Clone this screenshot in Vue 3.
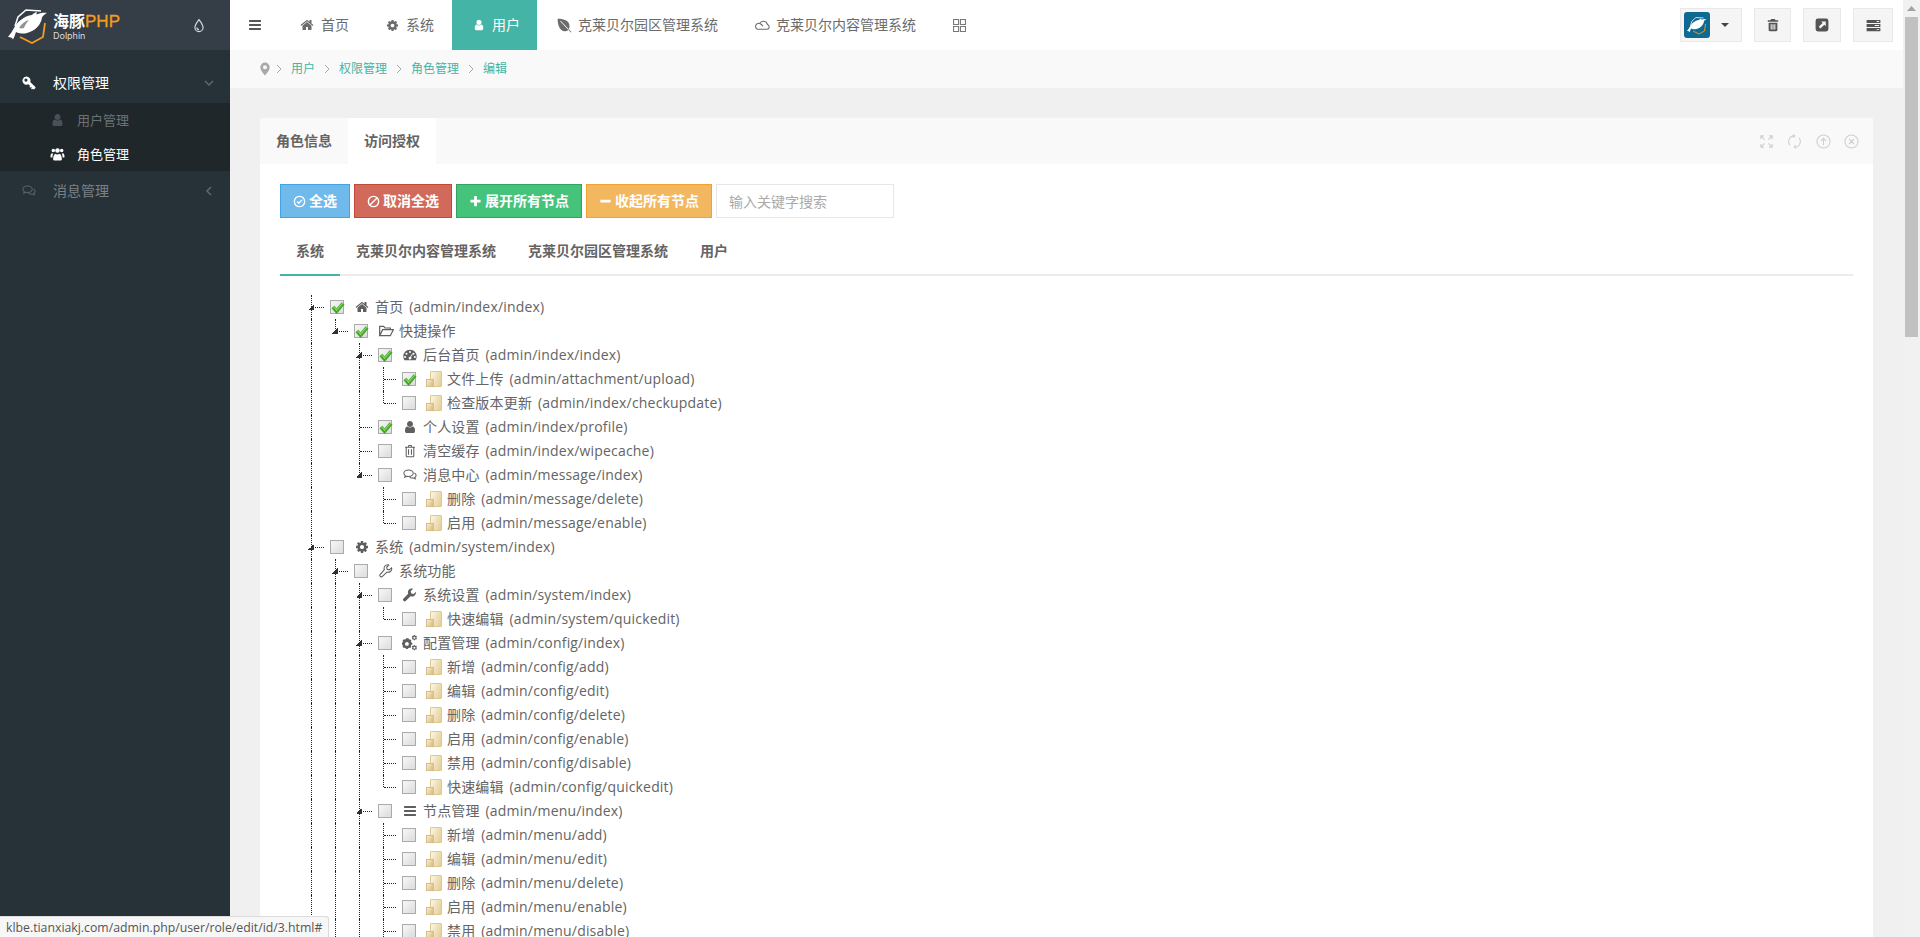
<script setup>
const FA = '0 0 1792 1792'
const V = '0 0 24 24'
const icons = {
  home: { vb: FA, d: 'M1472 992v480q0 26-19 45t-45 19h-384v-384h-256v384h-384q-26 0-45-19t-19-45v-480q0-1 .5-3t.5-3l575-474 575 474q1 2 1 6zm223-69l-62 74q-8 9-21 11h-3q-13 0-21-7l-692-577-692 577q-12 8-24 7-13-2-21-11l-62-74q-8-10-7-23.5t11-21.5l719-599q32-26 76-26t76 26l244 204v-195q0-14 9-23t23-9h192q14 0 23 9t9 23v408l219 182q10 8 11 21.5t-7 23.5z' },
  cog: { vb: FA, d: 'M1152 896q0-106-75-181t-181-75-181 75-75 181 75 181 181 75 181-75 75-181zm512-109v222q0 12-8 23t-20 13l-185 28q-19 54-39 91 35 50 107 138 10 12 10 25t-9 23q-27 37-99 108t-94 71q-12 0-26-9l-138-108q-44 23-91 38-16 136-29 186-7 28-36 28h-222q-14 0-24.5-8.5t-11.5-21.5l-28-184q-49-16-90-37l-141 107q-10 9-25 9-14 0-25-11-126-114-165-168-7-10-7-23 0-12 8-23 15-21 51-66.5t54-70.5q-27-50-41-99l-183-27q-13-2-21-12.5t-8-23.5v-222q0-12 8-23t19-13l186-28q14-46 39-92-40-57-107-138-10-12-10-24 0-10 9-23 26-36 98.5-107.5t94.5-71.5q13 0 26 10l138 107q44-23 91-38 16-136 29-186 7-28 36-28h222q14 0 24.5 8.5t11.5 21.5l28 184q49 16 90 37l142-107q9-9 24-9 13 0 25 10 129 119 165 170 7 8 7 22 0 12-8 23-15 21-51 66.5t-54 70.5q26 50 41 98l183 28q13 2 21 12.5t8 23.5z' },
  user: { vb: FA, d: 'M1536 1399q0 109-62.5 187t-150.5 78h-854q-88 0-150.5-78t-62.5-187q0-85 8.5-160.5t31.5-152 58.5-131 94-89 134.5-34.5q131 128 313 128t313-128q76 0 134.5 34.5t94 89 58.5 131 31.5 152 8.5 160.5zm-256-887q0 159-112.5 271.5t-271.5 112.5-271.5-112.5-112.5-271.5 112.5-271.5 271.5-112.5 271.5 112.5 112.5 271.5z' },
  bars: { vb: FA, d: 'M1664 1344v128q0 26-19 45t-45 19h-1408q-26 0-45-19t-19-45v-128q0-26 19-45t45-19h1408q26 0 45 19t19 45zm0-512v128q0 26-19 45t-45 19h-1408q-26 0-45-19t-19-45v-128q0-26 19-45t45-19h1408q26 0 45 19t19 45zm0-512v128q0 26-19 45t-45 19h-1408q-26 0-45-19t-19-45v-128q0-26 19-45t45-19h1408q26 0 45 19t19 45z' },
  plus: { vb: FA, d: 'M1600 736v192q0 40-28 68t-68 28h-416v416q0 40-28 68t-68 28h-192q-40 0-68-28t-28-68v-416h-416q-40 0-68-28t-28-68v-192q0-40 28-68t68-28h416v-416q0-40 28-68t68-28h192q40 0 68 28t28 68v416h416q40 0 68 28t28 68z' },
  minus: { vb: FA, d: 'M1600 736v192q0 40-28 68t-68 28h-1216q-40 0-68-28t-28-68v-192q0-40 28-68t68-28h1216q40 0 68 28t28 68z' },
  users: { vb: V, d: 'M12 10a4 4 0 1 0 0-8 4 4 0 0 0 0 8zM4.800 9a3 3 0 1 0 0-6 3 3 0 0 0 0 6zM19.200 9a3 3 0 1 0 0-6 3 3 0 0 0 0 6zM6.200 23h11.600c.9 0 1.700-.7 1.700-1.800 0-4.200-1-8.200-3.600-9.800-1 .9-2.400 1.400-3.900 1.400s-2.900-.5-3.900-1.400C5.500 13 4.500 17 4.500 21.200c0 1.100.8 1.800 1.700 1.800zM0 16.500c0 1 .7 1.500 1.500 1.500h1.800c0-2.500.3-5 1.400-7-.9-.1-1.300 0-2.200-.4C.8 11.200 0 13.800 0 16.500zM24 16.500c0 1-.7 1.500-1.500 1.500h-1.800c0-2.500-.3-5-1.400-7 .9-.1 1.300 0 2.200-.4 1.700.6 2.500 3.200 2.500 5.900z' },
  leaf: { vb: V, d: 'M1 1C12 1 20 4 20 13c0 6-4 8-7.500 8C4 21 1 10 1 1zM5 5l17.300 18.300.9-.9L5.800 4.200z' },
  cloud: { vb: V, stroke: true, d: 'M5.500 18.500a4.500 4.500 0 1 1 1.500-8.700 6.300 6.300 0 0 1 11.700 1.500 3.700 3.700 0 0 1-.7 7.200zM7 9.800c2.200.6 3.800 2 4.800 4.200' },
  grid: { vb: V, stroke: true, d: 'M2.500 2.500h8v8h-8zM13.500 2.500h8v8h-8zM2.500 13.500h8v8h-8zM13.500 13.500h8v8h-8z' },
  tint: { vb: V, stroke: true, d: 'M12 2C12 2 5 11 5 15.500a7 7 0 0 0 14 0C19 11 12 2 12 2zM8.500 15.500a3.500 3.500 0 0 0 3.500 3.500' },
  key: { vb: V, d: 'M7.500 1a7 7 0 0 1 6.600 9.400l8.900 8.600v1.700l-1.800 1.800h-1.700l-.9-.8-1.500 1.400-1.600-1.600 1.400-1.500-1.200-1.200-1.500 1.400-1.600-1.600 1.400-1.400-3-3A7 7 0 1 1 7.500 1zM6.800 4.300a2.700 2.700 0 1 0 0 5.400 2.700 2.700 0 0 0 0-5.400z' },
  comments: { vb: V, stroke: true, d: 'M9.500 3.500c-4.400 0-8 2.400-8 5.500 0 1.600 1 3.100 2.500 4.100L3 15.800l3.300-1.500c1 .3 2.100.3 3.200.3 4.400 0 8-2.500 8-5.600s-3.600-5.500-8-5.500zM19.500 8.500c1.900.9 3 2.400 3 4 0 1.500-.9 2.800-2.300 3.700l.8 2.300-3-1.400c-2.500.5-5-.1-6.500-1.600' },
  pin: { vb: V, d: 'M12 1a8 8 0 0 0-8 8c0 5 5 11 8 14 3-3 8-9 8-14a8 8 0 0 0-8-8zm0 11.500a3.500 3.500 0 1 1 0-7 3.500 3.500 0 0 1 0 7z' },
  trash: { vb: V, d: 'M9 1.500h6l1.500 2.500H21v2.500H3V4h4.500zM4.500 8h15v12.500c0 1.200-.8 2-2 2h-11c-1.200 0-2-.8-2-2zM8 10.500v9h1.800v-9zM11.100 10.500v9h1.800v-9zM14.200 10.500v9H16v-9z' },
  trashO: { vb: V, stroke: true, d: 'M3.500 5.500h17M9 5.500l1-3h4l1 3M5.500 5.500v15c0 .8.500 1.500 1.300 1.500h10.400c.8 0 1.300-.7 1.300-1.500v-15M9.500 9v9.500M14.500 9v9.500' },
  link: { vb: V, d: 'M5 1h14a4 4 0 0 1 4 4v14a4 4 0 0 1-4 4H5a4 4 0 0 1-4-4V5a4 4 0 0 1 4-4zm5.500 5l2.600 2.600-6.600 6.400 2.900 2.900 6.500-6.500 2.600 2.600V6z' },
  server: { vb: V, d: 'M1 3h22v5H1zM17 4.800v1.400h4V4.800zM1 9.500h22v5H1zM14 11.300v1.400h7v-1.400zM1 16h22v5H1zM17 17.800v1.400h4v-1.400z' },
  dash: { vb: V, d: 'M12 3C5.400 3 .5 8 .5 14.500c0 2.500.7 4.500 2 6.500h19c1.300-2 2-4 2-6.500C23.500 8 18.600 3 12 3zM12 5.300a1.700 1.700 0 1 1 0 3.400 1.700 1.700 0 0 1 0-3.400zM6 8a1.800 1.800 0 1 1 0 3.600A1.800 1.800 0 0 1 6 8zM3.600 13.500a1.800 1.800 0 1 1 0 3.600 1.800 1.800 0 0 1 0-3.600zM20.400 13.500a1.800 1.800 0 1 1 0 3.600 1.800 1.800 0 0 1 0-3.600zM18 8a1.800 1.800 0 1 1 0 3.600A1.800 1.800 0 0 1 18 8zM16 8.800l1.300.8-3.500 6a2.400 2.400 0 1 1-1.400-.7z' },
  folder: { vb: V, stroke: true, d: 'M2.500 19V5h6l2 2.500h8V10M2.500 19h16L23 10H7z' },
  wrenchO: { vb: V, stroke: true, d: 'M21.500 6.500l-4 3.500-3.500-.9-.9-3.500 3.700-3.700c-2.600-.9-5.300-.2-6.900 1.900-1.300 1.800-1.500 4-.7 6L2.200 17.600a2.600 2.600 0 0 0 3.700 3.700l7.700-7.500c2 .8 4.300.5 6-.9 2-1.700 2.700-4.100 1.900-6.400z' },
  wrench: { vb: V, d: 'M22.500 6.500l-4.300 3.900-3.900-1-1.100-3.900 4.100-4.100c-2.900-1-5.900-.2-7.600 2.100-1.400 1.900-1.700 4.300-.8 6.500l-8 7.900a2.900 2.900 0 0 0 4.100 4.100l8-7.900c2.200.9 4.700.6 6.600-1 2.200-1.800 3-4.400 2.900-6.600z' },
  cogs: { vb: V, d: 'M8.800 5l1.200.3.600 1.600 1.500-.5 1.900 1.900-.6 1.400.7 1.500 1.400.5v2.600l-1.400.5-.7 1.500.6 1.400-1.900 1.900-1.400-.6-1.500.7-.5 1.400H6.100l-.5-1.400-1.500-.7-1.400.6-1.900-1.900.6-1.400-.7-1.500-1.400-.5v-2.600l1.400-.5.7-1.500-.6-1.400 1.900-1.900 1.400.5 1.500-.6.500-1.300zM7.400 10.500a2.900 2.900 0 1 0 0 5.800 2.900 2.900 0 0 0 0-5.800zM19.500 0l.5 1.500 1.500-.2.900 1.600-1 1.100 1 1.100-.9 1.600-1.500-.2-.5 1.500h-1.800l-.5-1.500-1.500.2-.9-1.600 1-1.100-1-1.100.9-1.600 1.500.2.500-1.500zM18.600 2.500a1.500 1.500 0 1 0 0 3 1.500 1.500 0 0 0 0-3zM19.500 15l.5 1.500 1.500-.2.900 1.600-1 1.100 1 1.100-.9 1.600-1.500-.2-.5 1.500h-1.800l-.5-1.500-1.500.2-.9-1.600 1-1.100-1-1.100.9-1.600 1.500.2.500-1.500zM18.600 17.500a1.500 1.500 0 1 0 0 3 1.500 1.500 0 0 0 0-3z' },
  checkO: { vb: V, stroke: true, d: 'M12 2.500a9.500 9.500 0 1 0 0 19 9.500 9.500 0 0 0 0-19zM7.500 12l3.200 3.300 6-6.300' },
  ban: { vb: V, stroke: true, d: 'M12 2.500a9.500 9.500 0 1 0 0 19 9.500 9.500 0 0 0 0-19zM5.500 18.500l13-13' },
  expand: { vb: V, stroke: true, d: 'M9 9L3 3M3 8V3h5M15 9l6-6M16 3h5v5M9 15l-6 6M3 16v5h5M15 15l6 6M21 16v5h-5' },
  sync: { vb: V, stroke: true, d: 'M5 18A9 9 0 0 1 12 3M9 1l3.500 2L10 6M19 6a9 9 0 0 1-7 15M15 23l-3.500-2 2.500-3' },
  up: { vb: V, stroke: true, d: 'M12 1.500a10.500 10.500 0 1 0 0 21 10.500 10.500 0 0 0 0-21zM12 18V7M7.500 11.500L12 7l4.500 4.500' },
  close: { vb: V, stroke: true, d: 'M12 1.500a10.500 10.500 0 1 0 0 21 10.500 10.500 0 0 0 0-21zM8 8l8 8M16 8l-8 8' }
}

const navItems = [
  { icon: 'home', label: '首页' },
  { icon: 'cog', label: '系统' },
  { icon: 'user', label: '用户', active: true },
  { icon: 'leaf', label: '克莱贝尔园区管理系统' },
  { icon: 'cloud', label: '克莱贝尔内容管理系统' }
]
const crumbs = ['用户', '权限管理', '角色管理', '编辑']
const actions = [
  { cls: 'info', icon: 'checkO', label: '全选' },
  { cls: 'danger', icon: 'ban', label: '取消全选' },
  { cls: 'success', icon: 'plus', label: '展开所有节点' },
  { cls: 'warning', icon: 'minus', label: '收起所有节点' }
]
const subTabs = ['系统', '克莱贝尔内容管理系统', '克莱贝尔园区管理系统', '用户']

const f = (label, on = false) => ({ label, on })
const tree = [
  { label: '首页 (admin/index/index)', icon: 'home', on: true, c: [
    { label: '快捷操作', icon: 'folder', on: true, c: [
      { label: '后台首页 (admin/index/index)', icon: 'dash', on: true, c: [
        f('文件上传 (admin/attachment/upload)', true),
        f('检查版本更新 (admin/index/checkupdate)')
      ] },
      { label: '个人设置 (admin/index/profile)', icon: 'user', on: true },
      { label: '清空缓存 (admin/index/wipecache)', icon: 'trashO' },
      { label: '消息中心 (admin/message/index)', icon: 'comments', c: [
        f('删除 (admin/message/delete)'),
        f('启用 (admin/message/enable)')
      ] }
    ] }
  ] },
  { label: '系统 (admin/system/index)', icon: 'cog', more: true, c: [
    { label: '系统功能', icon: 'wrenchO', more: true, c: [
      { label: '系统设置 (admin/system/index)', icon: 'wrench', c: [
        f('快速编辑 (admin/system/quickedit)')
      ] },
      { label: '配置管理 (admin/config/index)', icon: 'cogs', c: [
        f('新增 (admin/config/add)'),
        f('编辑 (admin/config/edit)'),
        f('删除 (admin/config/delete)'),
        f('启用 (admin/config/enable)'),
        f('禁用 (admin/config/disable)'),
        f('快速编辑 (admin/config/quickedit)')
      ] },
      { label: '节点管理 (admin/menu/index)', icon: 'bars', more: true, c: [
        f('新增 (admin/menu/add)'),
        f('编辑 (admin/menu/edit)'),
        f('删除 (admin/menu/delete)'),
        f('启用 (admin/menu/enable)'),
        { label: '禁用 (admin/menu/disable)', more: true }
      ] }
    ] }
  ] }
]
const rows = []
const walk = (nodes, guides) => nodes.forEach((n, i) => {
  const last = i === nodes.length - 1 && !n.more
  rows.push({ ...n, guides, last, parent: !!n.c })
  if (n.c) walk(n.c, [...guides, !last])
})
walk(tree, [])
</script>

<template>
  <div class="app">
    <aside class="side">
      <div class="brand">
        <svg class="logo" viewBox="6 5 44 40">
          <path class="hex-w" d="M15 26l3-9 8-7 15 1" />
          <path class="hex-o" d="M20 37l12 6 11-6 2-14" />
          <path class="dolphin" d="M8 37c2.500-3 4.500-6 6-9 3-6 10-12 18-13 1-1.500 3-2.500 5-3-.5 1-.5 2-.5 2.500 3.500-1.500 7-2 10.500-1.500-2 1-4 2.500-5 4.500C41 25 35 31 27 33c-4 1-8 .5-11-1-1 3-2 5.500-3 7.500-.5-1.500-2-2.500-5-2.500z" />
          <path class="hole" d="M19 28c2-4 6-7 10-8-2 2-4 5-5 8-2 .5-3.500.5-5 0z" />
        </svg>
        <div class="brand-text">
          <div class="brand-name">海豚<b>PHP</b></div>
          <div class="brand-sub">Dolphin</div>
        </div>
        <svg class="ic tint" :viewBox="icons.tint.vb"><path class="st" :d="icons.tint.d" /></svg>
      </div>
      <nav class="menu">
        <div class="m-row open">
          <svg class="ic m-ic" :viewBox="icons.key.vb"><path fill-rule="evenodd" :d="icons.key.d" /></svg>
          <span>权限管理</span>
          <svg class="chev" viewBox="0 0 12 12"><path d="M2 4l4 4 4-4" /></svg>
        </div>
        <div class="sub">
          <div class="s-row">
            <svg class="ic s-ic" :viewBox="icons.user.vb"><path :d="icons.user.d" /></svg>
            <span>用户管理</span>
          </div>
          <div class="s-row cur">
            <svg class="ic s-ic" :viewBox="icons.users.vb"><path :d="icons.users.d" /></svg>
            <span>角色管理</span>
          </div>
        </div>
        <div class="m-row">
          <svg class="ic m-ic" :viewBox="icons.comments.vb"><path class="st" :d="icons.comments.d" /></svg>
          <span>消息管理</span>
          <svg class="chev" viewBox="0 0 12 12"><path d="M8 2L4 6l4 4" /></svg>
        </div>
      </nav>
    </aside>

    <div class="main">
      <header class="top">
        <div class="burger">
          <svg class="ic i14" :viewBox="icons.bars.vb"><path :d="icons.bars.d" /></svg>
        </div>
        <a v-for="n in navItems" :key="n.label" class="nav" :class="[{ on: n.active }, 'n-' + n.icon]">
          <svg class="ic" :viewBox="icons[n.icon].vb"><path :class="{ st: icons[n.icon].stroke }" fill-rule="evenodd" :d="icons[n.icon].d" /></svg>
          <span>{{ n.label }}</span>
        </a>
        <div class="grid-btn">
          <svg class="ic i15" :viewBox="icons.grid.vb"><path class="st" :d="icons.grid.d" /></svg>
        </div>
        <div class="top-right">
          <div class="tool avatar-btn">
            <div class="avatar">
              <svg viewBox="6 5 44 40">
                <path class="hex-o" d="M20 37l12 6 11-6 2-14" />
                <path class="hex-w" d="M15 26l3-9 8-7 15 1" />
                <path class="dolphin" d="M8 37c2.500-3 4.500-6 6-9 3-6 10-12 18-13 1-1.500 3-2.500 5-3-.5 1-.5 2-.5 2.500 3.500-1.500 7-2 10.500-1.500-2 1-4 2.500-5 4.500C41 25 35 31 27 33c-4 1-8 .5-11-1-1 3-2 5.500-3 7.500-.5-1.500-2-2.500-5-2.500z" />
              </svg>
            </div>
            <i class="caret"></i>
          </div>
          <div class="tool t-trash"><svg class="ic i14" :viewBox="icons.trash.vb"><path fill-rule="evenodd" :d="icons.trash.d" /></svg></div>
          <div class="tool t-link"><svg class="ic i14" :viewBox="icons.link.vb"><path fill-rule="evenodd" :d="icons.link.d" /></svg></div>
          <div class="tool t-server"><svg class="ic i15" :viewBox="icons.server.vb"><path fill-rule="evenodd" :d="icons.server.d" /></svg></div>
        </div>
      </header>

      <div class="crumbs">
        <svg class="ic pin" :viewBox="icons.pin.vb"><path fill-rule="evenodd" :d="icons.pin.d" /></svg>
        <template v-for="c in crumbs" :key="c">
          <svg class="sep" viewBox="0 0 8 10"><path d="M2 1l4 4-4 4" /></svg>
          <a>{{ c }}</a>
        </template>
      </div>

      <section class="card">
        <div class="card-head">
          <a class="c-tab">角色信息</a>
          <a class="c-tab on">访问授权</a>
          <div class="card-tools">
            <svg v-for="t in ['expand', 'sync', 'up', 'close']" :key="t" class="ic i15" :viewBox="icons[t].vb"><path class="st" :d="icons[t].d" /></svg>
          </div>
        </div>
        <div class="card-body">
          <div class="actions">
            <button v-for="a in actions" :key="a.label" class="btn" :class="a.cls">
              <svg class="ic i13" :viewBox="icons[a.icon].vb"><path :class="{ st: icons[a.icon].stroke }" :d="icons[a.icon].d" /></svg>
              {{ a.label }}
            </button>
            <input class="search" placeholder="输入关键字搜索" />
          </div>
          <div class="sub-tabs">
            <a v-for="(t, i) in subTabs" :key="t" class="sub-tab" :class="{ on: i === 0 }">{{ t }}</a>
          </div>
          <div class="tree">
            <div v-for="(r, i) in rows" :key="i" class="row">
              <i v-for="(g, j) in r.guides" :key="j" class="cell" :class="{ guide: g }"></i>
              <i class="cell conn" :class="{ end: r.last, par: r.parent }"></i>
              <span class="cb">
                <svg v-if="r.on" class="tick" viewBox="0 0 16 14"><path class="tick-a" d="M2.500 6.500l4 4.500 7-8.500" /><path class="tick-b" d="M2.500 5.500l4 4.300 7-8" /></svg>
              </span>
              <span class="node-ic">
                <svg v-if="r.icon" class="ic i14" :class="{ big: r.icon === 'cogs' || r.icon === 'folder' }" :viewBox="icons[r.icon].vb"><path :class="{ st: icons[r.icon].stroke }" fill-rule="evenodd" :d="icons[r.icon].d" /></svg>
                <i v-else class="file"></i>
              </span>
              <span class="node-txt">{{ r.label }}</span>
            </div>
          </div>
        </div>
      </section>
    </div>

    <div class="scrollbar">
      <svg viewBox="0 0 9 5"><path d="M4.500 0L9 5H0z" /></svg>
      <div class="thumb"></div>
    </div>
    <div class="status">klbe.tianxiakj.com/admin.php/user/role/edit/id/3.html#</div>
  </div>
</template>

<style>
html, body { margin: 0; height: 100%; overflow: hidden; }
</style>

<style scoped>
.app {
  display: flex;
  height: 937px;
  overflow: hidden;
  position: relative;
  background: #f0f0f0;
  color: #646464;
  font: 14px/20px "Open Sans", "Noto Sans CJK SC", sans-serif;
}
.ic { display: block; fill: currentColor; flex: none; }
.st { fill: none; stroke: currentColor; stroke-width: 2; }
.i13 { width: 13px; height: 13px; }
.i14 { width: 14px; height: 14px; }
.i15 { width: 15px; height: 15px; }
.big { width: 16px; height: 16px; }

.side { width: 230px; flex: none; background: #263238; }
.brand { height: 50px; background: #353e47; display: flex; align-items: center; padding: 0 24px 0 6px; color: #fff; }
.logo { width: 44px; height: 40px; flex: none; }
.hex-w { fill: none; stroke: #fff; stroke-width: 1.500; }
.hex-o { fill: none; stroke: #f39c1f; stroke-width: 1.800; }
.dolphin { fill: #fff; }
.hole { fill: #353e47; opacity: .55; }
.brand-text { margin-left: 3px; }
.brand-name { font-size: 16px; line-height: 18px; font-weight: 700; margin-top: 3px; display: flex; align-items: baseline; }
.brand-name b { color: #f39c1f; font-family: "Liberation Sans", sans-serif; font-weight: 400; font-size: 17px; -webkit-text-stroke: .3px #f39c1f; }
.brand-sub { font-size: 9px; line-height: 10px; color: #ddd; font-family: "Inter", sans-serif; }
.tint { width: 14px; height: 17px; color: #cfdde6; margin-left: auto; }

.menu { padding-top: 13px; }
.m-row { height: 40px; display: flex; align-items: center; padding-left: 22px; color: #7a8186; position: relative; }
.m-row.open { color: #fff; }
.m-ic { width: 14px; height: 14px; margin-right: 17px; }
.m-row .m-ic .st { stroke-width: 1.800; }
.m-row:not(.open) .m-ic { color: #59636a; }
.chev { position: absolute; right: 15px; top: 14px; width: 12px; height: 12px; fill: none; stroke: #5d686f; stroke-width: 1.500; }
.sub { background: #1f272b; }
.s-row { height: 34px; display: flex; align-items: center; padding-left: 50px; font-size: 13px; color: #6b7276; }
.s-ic { width: 15px; height: 14px; margin-right: 12px; color: #4a5257; }
.s-row.cur { color: #fff; }
.s-row.cur .s-ic { color: #fff; }

.main { flex: 1; min-width: 0; display: flex; flex-direction: column; }
.top { height: 50px; flex: none; background: #fff; display: flex; align-items: stretch; font-size: 13px; }
.burger { width: 50px; display: flex; align-items: center; justify-content: center; color: #555; }
.nav { display: flex; align-items: center; padding: 0 19px 0 20px; color: #6b6b6b; white-space: nowrap; }
.nav .ic { width: 14px; height: 14px; margin-right: 7px; }
.nav.n-home { padding-right: 17px; }
.nav.n-cog { padding-right: 18px; }
.nav.n-cog .ic { width: 13px; height: 13px; margin-right: 7px; }
.nav.n-user { padding: 0 17px 0 21px; }
.nav.n-user .ic { width: 12px; height: 12px; margin-right: 7px; }
.nav.n-leaf .ic { width: 15px; height: 15px; margin-right: 6px; }
.nav.n-cloud { padding-left: 18px; }
.nav.n-cloud .ic { width: 16px; height: 16px; margin-right: 5px; }
.nav .st { stroke-width: 1.600; }
.nav span { font-size: 14px; }
.nav.on { background: #44b4a6; color: #fff; }
.grid-btn { width: 48px; display: flex; align-items: center; justify-content: center; color: #777; }
.grid-btn .st { stroke-width: 1.700; }
.top-right { margin-left: auto; display: flex; align-items: center; gap: 12px; padding-right: 10px; }
.tool { height: 34px; box-sizing: border-box; background: #f5f5f5; border: 1px solid #e9e9e9; display: flex; align-items: center; justify-content: center; color: #545454; }
.t-trash { width: 37px; }
.t-link { width: 38px; }
.t-server { width: 40px; }
.avatar-btn { width: 62px; justify-content: flex-start; padding-left: 3px; }
.avatar { width: 26px; height: 26px; border-radius: 3px; background: #0f6a92; display: flex; align-items: center; justify-content: center; }
.avatar svg { width: 22px; height: 20px; }
.caret { margin-left: 11px; border: 4px solid transparent; border-top-color: #444; border-bottom: 0; }

.crumbs { height: 38px; flex: none; background: #f9f9f9; display: flex; align-items: center; padding-left: 28px; font-size: 12px; color: #44b4a6; }
.pin { width: 14px; height: 14px; color: #a9a9a9; margin-right: -5px; }
.sep { width: 8px; height: 10px; margin: 0 8px 0 8px; fill: none; stroke: #aaa; stroke-width: 1; }

.card { flex: 1; margin: 30px 30px 0; background: #fff; min-height: 0; overflow: hidden; }
.card-head { height: 46px; display: flex; background: #f9f9f9; position: relative; }
.c-tab { width: 88px; display: flex; align-items: center; justify-content: center; font-weight: 600; font-size: 14px; color: #646464; }
.c-tab.on { background: #fff; }
.card-tools { margin-left: auto; display: flex; align-items: center; gap: 13.500px; padding-right: 14px; color: #cfcfcf; }
.card-tools .st { stroke-width: 1.700; }
.card-body { padding: 20px; }

.actions { display: flex; gap: 4px; height: 34px; }
.btn { box-sizing: border-box; height: 34px; border: 1px solid; color: #fff; font: 700 14px/20px "Open Sans", "Noto Sans CJK SC", sans-serif; padding: 0 12px; display: flex; align-items: center; gap: 3px; white-space: nowrap; }
.btn .st { stroke-width: 2.600; }
.info { background: #70b9eb; border-color: #43a3e5; }
.danger { background: #d26a5c; border-color: #c54736; }
.success { background: #46c37b; border-color: #34a263; }
.warning { background: #f3b760; border-color: #efa231; }
.search { box-sizing: border-box; width: 178px; height: 34px; border: 1px solid #e6e6e6; padding: 0 12px; font: 14px "Open Sans", "Noto Sans CJK SC", sans-serif; outline: none; }
.search::placeholder { color: #aaa; }

.sub-tabs { margin-top: 10px; display: flex; height: 46px; border-bottom: 2px solid #ececec; }
.sub-tab { padding: 0 16px; display: flex; align-items: center; font-weight: 600; font-size: 14px; color: #646464; margin-bottom: -2px; border-bottom: 2px solid transparent; }
.sub-tab.on { border-bottom-color: #44b4a6; }

.tree { margin-top: 19px; font-size: 14px; color: #646464; }
.row { height: 24px; display: flex; align-items: center; padding-left: 24px; white-space: nowrap; }
.cell { flex: none; width: 24px; height: 24px; position: relative; }
.guide::before, .conn::before { content: ""; position: absolute; left: 7px; top: 0; bottom: 0; border-left: 1px dotted #222; }
.conn.end::before { bottom: 12px; }
.conn::after { content: ""; position: absolute; left: 8px; width: 12px; top: 12px; border-top: 1px dotted #222; }
.conn.par::after { left: 11px; width: 9px; }
.conn.par { background: linear-gradient(135deg, transparent 50%, #333 50%) 4px 9px / 6px 6px no-repeat; }
.cell + .cb { margin-left: 2px; }
.cb { flex: none; box-sizing: border-box; width: 14px; height: 14px; border: 1px solid #aaa; background: linear-gradient(135deg, #f7f7f7, #dcdcdc); position: relative; }
.tick { position: absolute; left: -1px; top: 0; width: 16px; height: 13px; fill: none; stroke-width: 4; }
.tick-a { stroke: #46a628; }
.tick-b { stroke: #8fd56c; stroke-width: 1.200; }
.node-ic { flex: none; width: 21px; margin-left: 7px; display: flex; justify-content: center; color: #5f5f5f; }
.node-ic .st { stroke-width: 1.800; }
.file { display: block; width: 12px; height: 16px; margin-left: 4px; box-sizing: border-box; border: 1px solid #dcc891; border-radius: 1px; background: linear-gradient(110deg, #fdf6e0, #e3cc97); position: relative; }
.file::before { content: ""; position: absolute; left: -5px; bottom: -1px; width: 8px; height: 8px; box-sizing: border-box; border: 1px solid #d4bd87; background: linear-gradient(120deg, #f8eecd, #d6bb7c); }
.node-txt { margin-left: 3px; word-spacing: 2px; letter-spacing: .18px; }

.scrollbar { width: 17px; flex: none; background: #f1f1f1; display: flex; flex-direction: column; align-items: center; }
.scrollbar svg { width: 9px; height: 5px; margin: 6px 0; fill: #a3a3a3; }
.thumb { width: 13px; height: 320px; background: #c1c1c1; }

.status { position: absolute; left: 0; bottom: 0; height: 21px; box-sizing: border-box; padding: 0 6px; font-size: 12.270px; line-height: 21px; background: #f7f7f7; border-top: 1px solid #dcdcdc; border-right: 1px solid #dcdcdc; border-top-right-radius: 3px; color: #555; }
</style>
